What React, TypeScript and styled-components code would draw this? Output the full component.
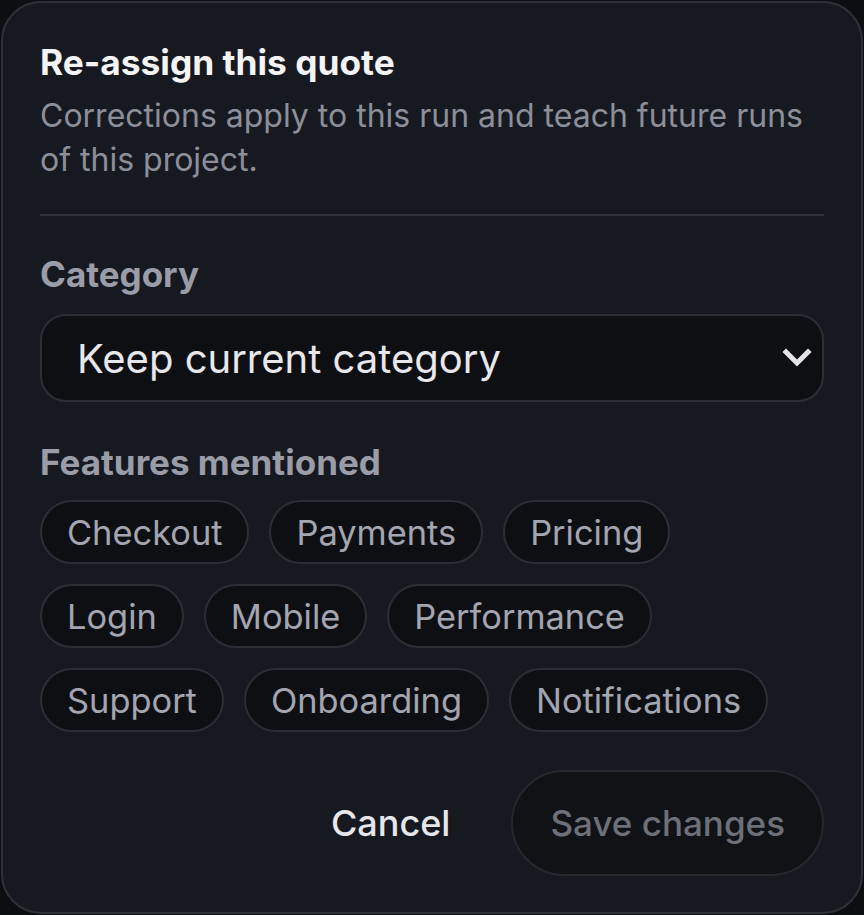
import React from 'react';
import styled, { createGlobalStyle } from 'styled-components';

const GlobalStyle = createGlobalStyle`
  html, body {
    margin: 0;
    padding: 0;
    background: #0d0e12;
  }
  body {
    font-family: Inter, "Noto Sans", "Liberation Sans", sans-serif;
  }
`;

const Page = styled.div`
  padding: 1px;
`;

const Dialog = styled.div`
  width: 862px;
  box-sizing: border-box;
  background: #171920;
  border: 2px solid #2f3138;
  border-radius: 40px;
  padding: 38px 37px 36px;
  display: flex;
  flex-direction: column;
`;

const Title = styled.h2`
  margin: 0;
  font-size: 35.3px;
  line-height: 44px;
  font-weight: 700;
  color: #f4f4f6;
`;

const Subtitle = styled.p`
  margin: 9px 0 0;
  font-size: 32px;
  line-height: 44px;
  color: #8c8f9a;
`;

const Divider = styled.hr`
  margin: 32px 0 36px;
  border: none;
  height: 2px;
  background: #2f3138;
`;

const Label = styled.div`
  font-size: 35px;
  line-height: 44px;
  font-weight: 700;
  color: #9a9ca8;
`;

const SelectBox = styled.div`
  margin-top: 18px;
  height: 88px;
  box-sizing: border-box;
  border: 2px solid #2c2e35;
  border-radius: 26px;
  background: #0e0f13;
  display: flex;
  align-items: center;
  justify-content: space-between;
  padding: 0 10px 0 35px;
  font-size: 40px;
  color: #e8e8ec;
`;

const Chevron = styled.svg`
  width: 30px;
  height: 20px;
`;

const FeaturesLabel = styled(Label)`
  margin-top: 38px;
`;

const Chips = styled.div`
  margin-top: 16px;
  display: flex;
  flex-wrap: wrap;
  gap: 20px;
`;

const Chip = styled.button`
  height: 64px;
  box-sizing: border-box;
  padding: 0 25px;
  border: 2px solid #2c2e35;
  border-radius: 32px;
  background: #0e0f13;
  color: #a3a5b0;
  font-family: inherit;
  font-size: 34.4px;
`;

const Footer = styled.div`
  margin-top: 38px;
  display: flex;
  justify-content: flex-end;
  align-items: center;
  gap: 61px;
`;

const CancelButton = styled.button`
  border: none;
  background: transparent;
  color: #e6e7ea;
  font-family: inherit;
  font-size: 36px;
  font-weight: 500;
  padding: 0;
`;

const SaveButton = styled.button`
  height: 106px;
  padding: 0 37px;
  box-sizing: border-box;
  border: 2px solid #26282e;
  border-radius: 53px;
  background: #111216;
  color: #6d7079;
  font-family: inherit;
  font-size: 35px;
  font-weight: 500;
`;

const features = [
  'Checkout',
  'Payments',
  'Pricing',
  'Login',
  'Mobile',
  'Performance',
  'Support',
  'Onboarding',
  'Notifications',
];

export default function App() {
  return (
    <>
      <GlobalStyle />
      <Page>
        <Dialog>
          <Title>Re-assign this quote</Title>
          <Subtitle>
            Corrections apply to this run and teach future runs of this project.
          </Subtitle>
          <Divider />
          <Label>Category</Label>
          <SelectBox>
            <span>Keep current category</span>
            <Chevron viewBox="0 0 30 20" fill="none" stroke="#e4e4e8" strokeWidth="5" strokeLinecap="square">
              <path d="M4 4L15 15L26 4" />
            </Chevron>
          </SelectBox>
          <FeaturesLabel>Features mentioned</FeaturesLabel>
          <Chips>
            {features.map((f) => (
              <Chip key={f}>{f}</Chip>
            ))}
          </Chips>
          <Footer>
            <CancelButton>Cancel</CancelButton>
            <SaveButton disabled>Save changes</SaveButton>
          </Footer>
        </Dialog>
      </Page>
    </>
  );
}
